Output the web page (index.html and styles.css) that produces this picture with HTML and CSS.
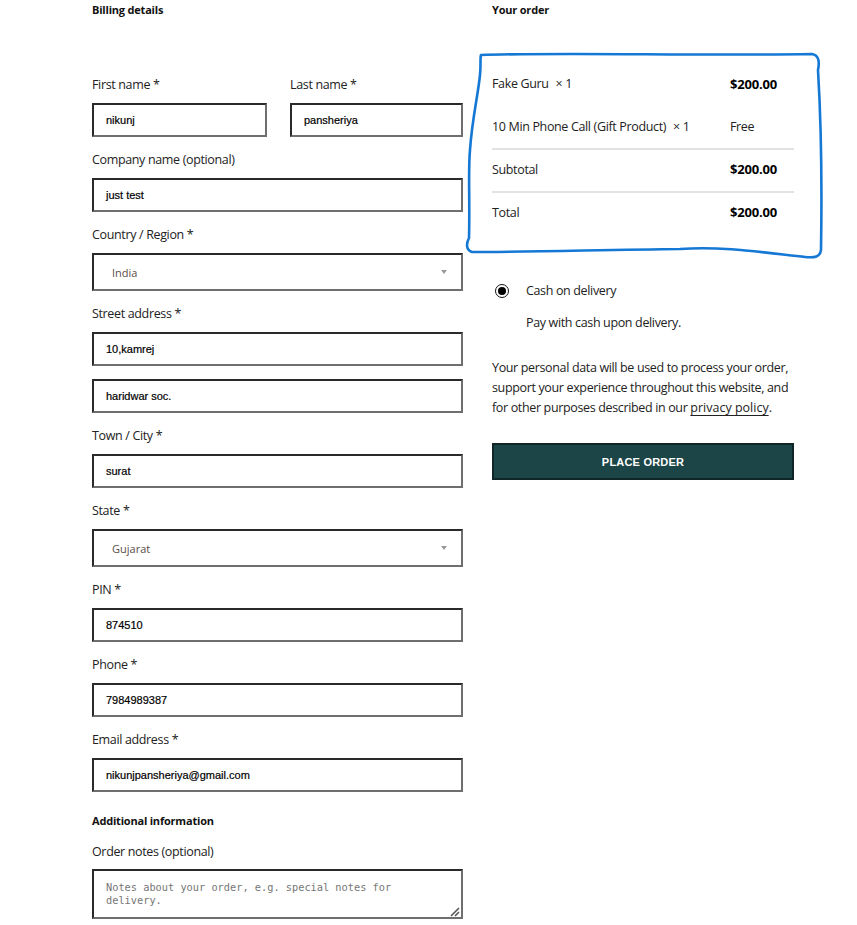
FILE: index.html
```html
<!DOCTYPE html>
<html lang="en">
<head>
<meta charset="utf-8">
<title>Checkout</title>
<link rel="stylesheet" href="styles.css">
</head>
<body>
<div class="checkout">
  <section class="billing">
    <h3 class="heading">Billing details</h3>
    <div class="fields">
      <div class="row-two">
        <div class="field">
          <label class="label">First name <span class="req">*</span></label>
          <div class="input">nikunj</div>
        </div>
        <div class="field">
          <label class="label">Last name <span class="req">*</span></label>
          <div class="input">pansheriya</div>
        </div>
      </div>
      <div class="field">
        <label class="label">Company name (optional)</label>
        <div class="input">just test</div>
      </div>
      <div class="field">
        <label class="label">Country / Region <span class="req">*</span></label>
        <div class="select"><span>India</span><span class="arrow"></span></div>
      </div>
      <div class="field">
        <label class="label">Street address <span class="req">*</span></label>
        <div class="input">10,kamrej</div>
        <div class="input second">haridwar soc.</div>
      </div>
      <div class="field">
        <label class="label">Town / City <span class="req">*</span></label>
        <div class="input">surat</div>
      </div>
      <div class="field">
        <label class="label">State <span class="req">*</span></label>
        <div class="select"><span>Gujarat</span><span class="arrow"></span></div>
      </div>
      <div class="field">
        <label class="label">PIN <span class="req">*</span></label>
        <div class="input">874510</div>
      </div>
      <div class="field">
        <label class="label">Phone <span class="req">*</span></label>
        <div class="input">7984989387</div>
      </div>
      <div class="field">
        <label class="label">Email address <span class="req">*</span></label>
        <div class="input">nikunjpansheriya@gmail.com</div>
      </div>
    </div>
    <h3 class="heading additional">Additional information</h3>
    <div class="field notes">
      <label class="label">Order notes (optional)</label>
      <div class="textarea">Notes about your order, e.g. special notes for delivery.<span class="grip"><svg width="10" height="10" viewBox="0 0 10 10"><path d="M1 9 L9 1 M5 9 L9 5" stroke="#555" stroke-width="1.6" fill="none"/></svg></span></div>
    </div>
  </section>

  <section class="order">
    <h3 class="heading">Your order</h3>
    <div class="order-table">
      <div class="trow">
        <div class="tname">Fake Guru <span class="qty">×&nbsp;1</span></div>
        <div class="tval strong">$200.00</div>
      </div>
      <div class="trow">
        <div class="tname">10 Min Phone Call (Gift Product) <span class="qty">×&nbsp;1</span></div>
        <div class="tval">Free</div>
      </div>
      <div class="trow bordered">
        <div class="tname">Subtotal</div>
        <div class="tval strong">$200.00</div>
      </div>
      <div class="trow bordered">
        <div class="tname">Total</div>
        <div class="tval strong">$200.00</div>
      </div>
    </div>

    <div class="payment">
      <div class="pay-method">
        <span class="radio"><span class="dot"></span></span>
        <span>Cash on delivery</span>
      </div>
      <p class="pay-desc">Pay with cash upon delivery.</p>
    </div>

    <p class="privacy">Your personal data will be used to process your order, support your experience throughout this website, and for other purposes described in our <a class="plink" href="#">privacy policy</a>.</p>

    <button class="place-order" type="button">PLACE ORDER</button>
  </section>
</div>

<svg class="scribble" width="857" height="280" viewBox="0 0 857 280">
  <path d="M481 55 C560 52 700 56 812 54 C818 55 820 60 818 70 C821 120 822 190 821 250 C820 257 815 258 805 257 C760 252 720 246 680 249 C600 250 520 252 472 252 C466 250 466 244 469 238 C470 200 468 170 470 150 C472 120 478 95 480 75 C481 65 480 58 481 55 Z" fill="none" stroke="#1478d4" stroke-width="2.6" stroke-linejoin="round"/>
</svg>
</body>
</html>
```

FILE: styles.css
```css
* { box-sizing: border-box; }

html, body {
  margin: 0;
  padding: 0;
  background: #fff;
}

body {
  width: 857px;
  height: 925px;
  overflow: hidden;
  position: relative;
  font-family: "Open Sans", "Noto Sans", sans-serif;
  color: #222;
  font-size: 12.5px;
  letter-spacing: -0.35px;
}

.checkout {
  display: grid;
  grid-template-columns: 371px 302px;
  column-gap: 29px;
  padding-left: 92px;
}

.heading {
  margin: 0;
  font-size: 11px;
  font-weight: 700;
  line-height: 20px;
  color: #111;
  letter-spacing: -0.2px;
}

.billing .fields {
  margin-top: 54px;
}

.row-two {
  display: grid;
  grid-template-columns: 175px 173px;
  column-gap: 23px;
}

.field {
  display: flex;
  flex-direction: column;
  margin-bottom: 12px;
}

.label {
  line-height: 20px;
  padding-top: 1px;
  margin-bottom: 8px;
  color: #222;
}

.input,
.select,
.textarea {
  border-width: 2px;
  border-style: solid;
  border-color: #2a2a2a #6f6f6f #6f6f6f #2a2a2a;
  background: #fff;
  letter-spacing: 0;
}

.input {
  height: 34px;
  padding: 0 12px;
  display: flex;
  align-items: center;
  font-family: "Liberation Sans", Arial, sans-serif;
  font-size: 11px;
  color: #000;
  -webkit-text-stroke: 0.2px #000;
}

.input.second {
  margin-top: 13px;
}

.select {
  height: 38px;
  padding: 0 12px 0 18px;
  display: flex;
  align-items: center;
  justify-content: space-between;
  font-size: 11px;
  color: #5a4e47;
}

.arrow {
  width: 0;
  height: 0;
  border-left: 3.5px solid transparent;
  border-right: 3.5px solid transparent;
  border-top: 4px solid #9a9a9a;
  margin-right: 2px;
}

.additional {
  margin-top: 19px;
  margin-bottom: 10px;
}

.notes .label {
  margin-bottom: 7px;
}

.textarea {
  height: 50px;
  position: relative;
  padding: 10px 40px 0 12px;
  font-family: "DejaVu Sans Mono", "Liberation Mono", monospace;
  font-size: 10.3px;
  line-height: 13px;
  color: #767676;
}

.grip {
  position: absolute;
  right: 1px;
  bottom: 0;
  width: 10px;
  height: 10px;
  display: block;
  line-height: 0;
}

/* Order column */
.order-table {
  margin-top: 42px;
}

.trow {
  display: grid;
  grid-template-columns: 238px 64px;
  height: 43px;
  align-items: center;
}

.trow.bordered {
  border-top: 2px solid #e2e2e2;
  padding-bottom: 3px;
}

.tname, .tval {
  font-size: 12.5px;
  color: #222;
}

.qty {
  margin-left: 4px;
}

.tval.strong {
  font-weight: 700;
  font-size: 13px;
  color: #000;
  letter-spacing: -0.2px;
}

.payment {
  margin-top: 46px;
}

.pay-method {
  display: flex;
  align-items: center;
  height: 22px;
  line-height: 22px;
}

.radio {
  width: 14px;
  height: 14px;
  border: 1.5px solid #111;
  border-radius: 50%;
  display: flex;
  align-items: center;
  justify-content: center;
  margin-left: 3px;
  margin-right: 17px;
}

.dot {
  width: 8px;
  height: 8px;
  border-radius: 50%;
  background: #000;
}

.pay-desc {
  margin: 11px 0 0 34px;
  line-height: 20px;
}

.privacy {
  margin: 25px 0 0;
  line-height: 20px;
  color: #222;
}

.plink {
  color: #222;
  text-decoration: underline;
  text-underline-offset: 3px;
  letter-spacing: 0;
}

.place-order {
  display: block;
  width: 302px;
  height: 37px;
  margin-top: 25px;
  background: #1c4548;
  border: 2px solid #0f2628;
  color: #fff;
  font-family: "Liberation Sans", Arial, sans-serif;
  font-size: 11px;
  font-weight: 700;
  letter-spacing: 0.2px;
  cursor: pointer;
}

.scribble {
  position: absolute;
  left: 0;
  top: 0;
  pointer-events: none;
}
```
